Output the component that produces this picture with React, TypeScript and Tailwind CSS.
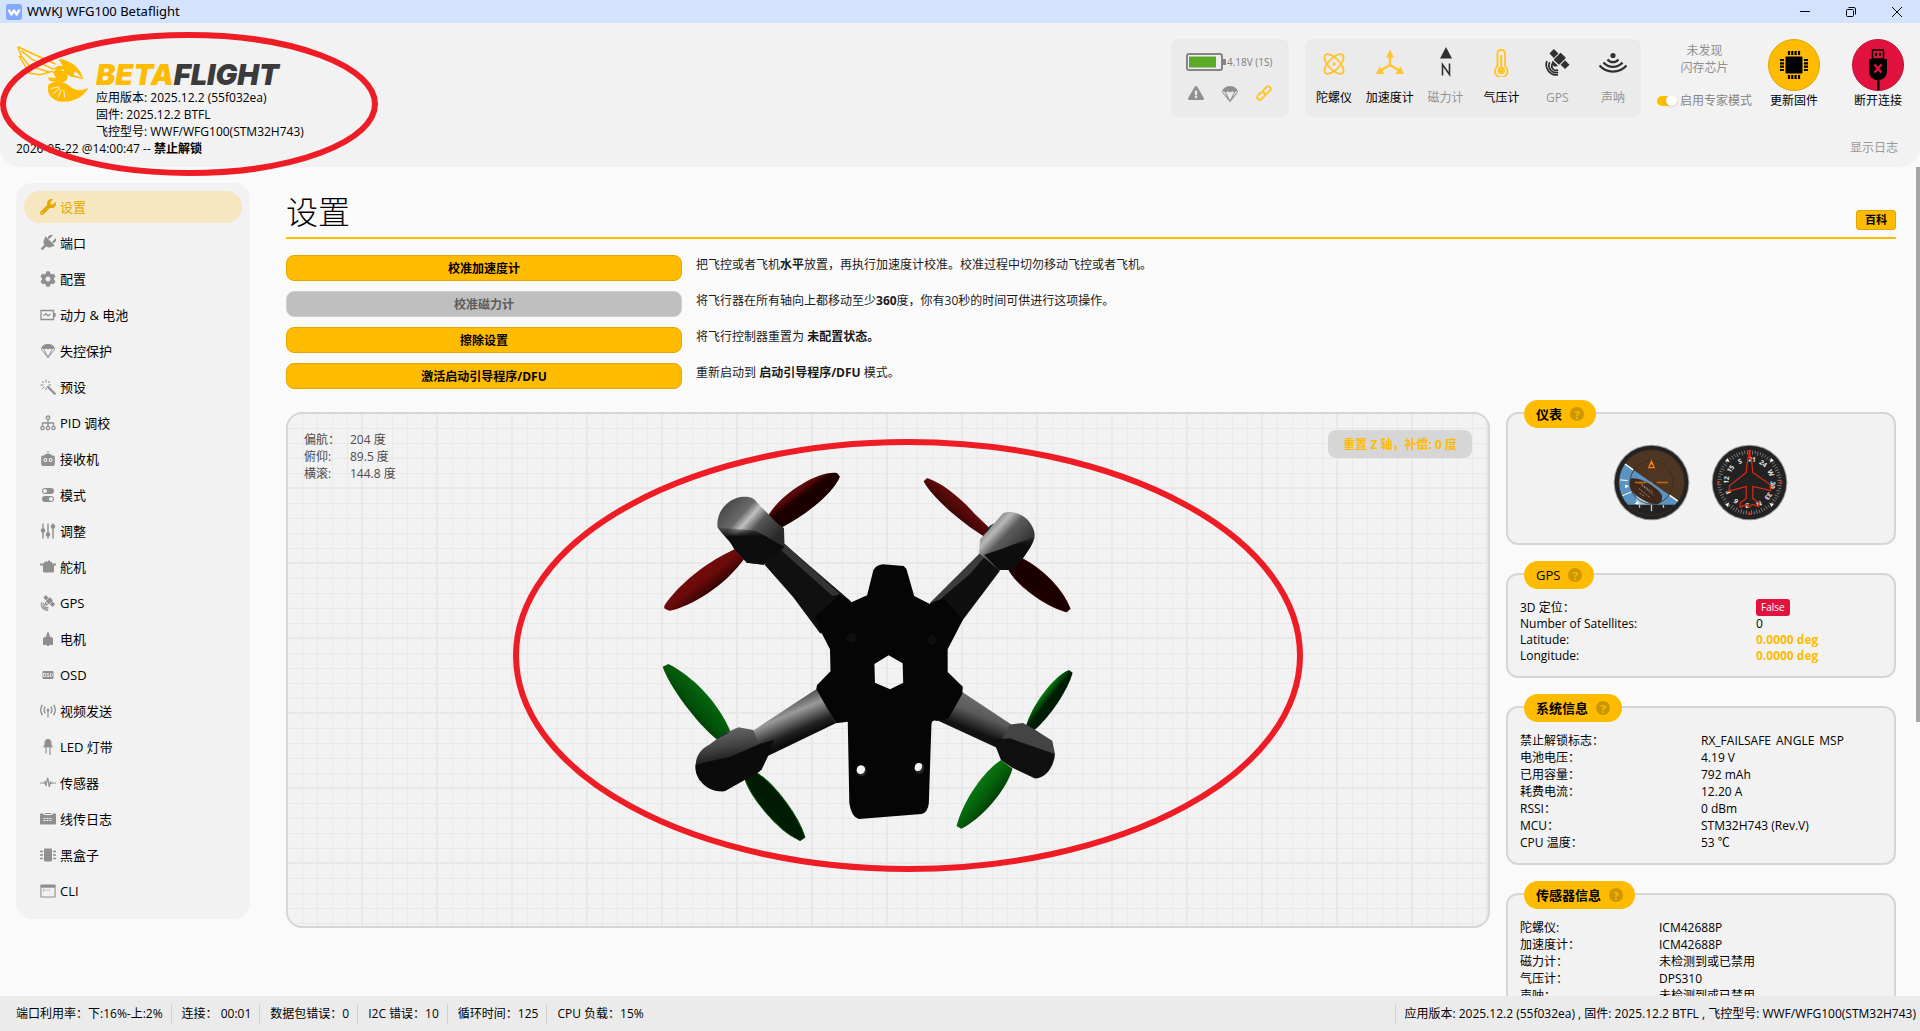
import { useState } from "react";
import type { ReactNode } from "react";
import { FaWrench, FaCog, FaExclamationTriangle } from "react-icons/fa";

type NavItem = { nome: string; icon: ReactNode };
type Row = { label: string; value: ReactNode };

function Glyph({ children }: { children: ReactNode }) {
  return (
    <svg viewBox="0 0 16 16" className="size-4" fill="currentColor">
      {children}
    </svg>
  );
}

function Parachute({ className }: { className: string }) {
  return (
    <svg viewBox="0 0 16 16" className={className} fill="currentColor">
      <path d="M1 6.4a7 5.6 0 0 1 14 0L13.600 5.600 12 6.600 10 5.600 8 6.600 6 5.600 4 6.600 2.400 5.600z" />
      <path
        d="M1.300 6.400 8 14.600 14.700 6.400M4 6.400 8 14.600 12 6.400"
        fill="none"
        stroke="currentColor"
        strokeWidth="0.900"
      />
    </svg>
  );
}

function Satellite({ className }: { className: string }) {
  return (
    <svg viewBox="0 0 30 30" className={className} fill="currentColor">
      <g transform="rotate(45 17 11)">
        <rect x="5" y="7.500" width="7" height="7" />
        <rect x="13" y="5" width="8.500" height="11" rx="1" />
        <rect x="22.500" y="7.500" width="7" height="7" />
        <path d="M13 17.500h8.500l-2 3.500h-4.500z" />
      </g>
      <g fill="none" stroke="currentColor" strokeWidth="1.900">
        <path d="M9.500 16.500a4.500 4.500 0 0 0 6 6.500" />
        <path d="M6.400 14.500a8 8 0 0 0 9.400 11.400" />
        <path d="M3.200 13.500a11.400 11.400 0 0 0 12.300 15.200" />
      </g>
    </svg>
  );
}

const navItems: NavItem[] = [
  { nome: "设置", icon: <FaWrench className="size-4" /> },
  {
    nome: "端口",
    icon: (
      <Glyph>
        <g transform="rotate(45 8 8)">
          <rect x="3.700" y="-1.500" width="2.300" height="6" rx="1" />
          <rect x="10" y="-1.500" width="2.300" height="6" rx="1" />
          <path d="M1.800 5h12.400v2h-.7a5.400 5.400 0 0 1-4.200 4.800V17H6.700v-5.200a5.400 5.400 0 0 1-4.200-4.800h-.7z" />
        </g>
      </Glyph>
    ),
  },
  { nome: "配置", icon: <FaCog className="size-4" /> },
  {
    nome: "动力 & 电池",
    icon: (
      <Glyph>
        <path d="M1 3.500h12.500v9H1z" fill="none" stroke="currentColor" strokeWidth="1.300" />
        <rect x="14" y="6" width="1.600" height="4" />
        <path d="M3.500 8.700 6 6.700l2 2.300 2.500-2" fill="none" stroke="currentColor" strokeWidth="1.200" />
      </Glyph>
    ),
  },
  { nome: "失控保护", icon: <Parachute className="size-4" /> },
  {
    nome: "预设",
    icon: (
      <Glyph>
        <path
          d="M8 8l6.800 6.800"
          stroke="currentColor"
          strokeWidth="2.200"
          strokeLinecap="round"
        />
        <path
          d="M6 .5v3M6 8.500v2.500M.5 6h3M8.500 6H11M2 2l2 2M10 2 8 4M2 10l2-2"
          stroke="currentColor"
          strokeWidth="1"
        />
      </Glyph>
    ),
  },
  {
    nome: "PID 调校",
    icon: (
      <Glyph>
        <g fill="none" stroke="currentColor" strokeWidth="1.300">
          <circle cx="8" cy="2.700" r="1.700" />
          <circle cx="2.500" cy="13" r="1.700" />
          <circle cx="8" cy="13" r="1.700" />
          <circle cx="13.500" cy="13" r="1.700" />
          <path d="M8 4.500v6.700M2.500 11.200V8h11v3.200" />
        </g>
      </Glyph>
    ),
  },
  {
    nome: "接收机",
    icon: (
      <Glyph>
        <rect x="7.500" y="0" width="1" height="4" />
        <path
          fillRule="evenodd"
          d="M4 4.500 5.500 3h5L12 4.500h1A1.800 1.800 0 0 1 14.800 6.300v7A1.800 1.800 0 0 1 13 15H3a1.800 1.800 0 0 1-1.800-1.700v-7A1.800 1.800 0 0 1 3 4.500zM5.300 7a2 2 0 1 0 .01 0zM10.700 7a2 2 0 1 0 .01 0z"
        />
        <circle cx="5.300" cy="9" r="0.900" />
        <circle cx="10.700" cy="9" r="0.900" />
      </Glyph>
    ),
  },
  {
    nome: "模式",
    icon: (
      <Glyph>
        <path fillRule="evenodd" d="M5 1h6a3 3 0 0 1 0 6H5a3 3 0 0 1 0-6zm0 1a2 2 0 1 0 .01 0z" />
        <path fillRule="evenodd" d="M5 9h6a3 3 0 0 1 0 6H5a3 3 0 0 1 0-6zm6 1a2 2 0 1 0 .01 0z" />
      </Glyph>
    ),
  },
  {
    nome: "调整",
    icon: (
      <Glyph>
        <path d="M3 .5v15M8 .5v15M13 .5v15" stroke="currentColor" strokeWidth="1.400" />
        <circle cx="3" cy="7.500" r="2.300" />
        <circle cx="8" cy="11.500" r="2.300" />
        <circle cx="13" cy="3.500" r="2.300" />
      </Glyph>
    ),
  },
  {
    nome: "舵机",
    icon: (
      <Glyph>
        <path d="M5 2.500h3V1.500h2v1h1l1.500 2H16v2h-2V12a1.500 1.500 0 0 1-1.500 1.500h-8A1.500 1.500 0 0 1 3 12V6.500H0v-2h3.500z" />
      </Glyph>
    ),
  },
  { nome: "GPS", icon: <Satellite className="size-4" /> },
  {
    nome: "电机",
    icon: (
      <Glyph>
        <path d="M7.400 1.500Q8 0 8.600 1.500L9.800 5v1h1.700l1.500 1.500V14H9v1H7v-1H3V7.500L4.500 6h1.700V5z" />
      </Glyph>
    ),
  },
  {
    nome: "OSD",
    icon: (
      <Glyph>
        <rect x="2.500" y="4" width="11" height="8" rx="1" />
        <g fill="none" stroke="#f2f2f2" strokeWidth="0.800">
          <rect x="3.600" y="6.500" width="2.200" height="3" />
          <path d="M9.200 6.500H7.300V8h1.600v1.500H7M10.500 6.500v3h1.200l.7-.8V7.300l-.7-.8z" />
        </g>
      </Glyph>
    ),
  },
  {
    nome: "视频发送",
    icon: (
      <Glyph>
        <circle cx="8" cy="7" r="1.500" />
        <rect x="7.400" y="8" width="1.200" height="6.500" />
        <path
          d="M5.400 3.800a4.600 4.600 0 0 0 0 6.400M10.600 3.800a4.600 4.600 0 0 1 0 6.400M2.500 2a8 8 0 0 0 0 10M13.500 2a8 8 0 0 1 0 10"
          fill="none"
          stroke="currentColor"
          strokeWidth="1.500"
        />
      </Glyph>
    ),
  },
  {
    nome: "LED 灯带",
    icon: (
      <Glyph>
        <path d="M4.500 4.500a3.500 4.500 0 0 1 7 0V6.500h1v2h-9v-2h1z" />
        <path d="M6 9v5.500M10 9v7" stroke="currentColor" strokeWidth="1.200" />
      </Glyph>
    ),
  },
  {
    nome: "传感器",
    icon: (
      <Glyph>
        <path
          d="M0 8h4l1-1.500L6 11 7.700 2.500 9.300 12l1.200-5 1 1.500L12.300 8H16"
          fill="none"
          stroke="currentColor"
          strokeWidth="1.200"
        />
      </Glyph>
    ),
  },
  {
    nome: "线传日志",
    icon: (
      <Glyph>
        <path d="M0 2.500h3L4.500 4h7L13 2.500h3v10a1 1 0 0 1-1 1H1a1 1 0 0 1-1-1z" />
        <path d="M5 2.500h6" stroke="currentColor" strokeWidth="1" />
        <path d="M3.500 7.500h9M3.500 9.500h9" stroke="#f2f2f2" strokeWidth="1" strokeDasharray="2 1" />
      </Glyph>
    ),
  },
  {
    nome: "黑盒子",
    icon: (
      <Glyph>
        <rect x="4" y="1.500" width="8" height="13" rx="0.800" />
        <path
          d="M0 4.500h3M0 8h3M0 11.500h3M13 4.500h3M13 8h3M13 11.500h3"
          stroke="currentColor"
          strokeWidth="1.300"
        />
      </Glyph>
    ),
  },
  {
    nome: "CLI",
    icon: (
      <Glyph>
        <path
          fillRule="evenodd"
          d="M1 1.500h14a.6.6 0 0 1 .6.600v11.800a.6.6 0 0 1-.6.600H1a.6.6 0 0 1-.6-.6V2.100a.6.6 0 0 1 .6-.6zM1.500 4.800v8.700h13V4.800z"
        />
        <path d="M3 6l1.700 1.200L3 8.500M6 7.200h1.500M8.500 7.200H10" fill="none" stroke="currentColor" strokeWidth="0.800" />
      </Glyph>
    ),
  },
];

const sensors = [
  {
    nome: "陀螺仪",
    ativo: true,
    icon: (
      <g fill="none" stroke="currentColor" strokeWidth="1.800">
        <ellipse cx="15" cy="17" rx="5.500" ry="12.500" transform="rotate(44 15 17)" />
        <ellipse cx="15" cy="17" rx="5.500" ry="12.500" transform="rotate(-44 15 17)" />
        <circle cx="15" cy="17" r="1.700" fill="currentColor" stroke="none" />
      </g>
    ),
  },
  {
    nome: "加速度计",
    ativo: true,
    icon: (
      <g>
        <path d="M15 6v12M15 18 5 24M15 18l10 6" stroke="currentColor" strokeWidth="2.400" fill="none" />
        <path d="M15 2.500 19 10.500h-8zM1 27 4.500 19.500l5 7.500zM29 27l-3.500-7.500-5 7.500z" />
      </g>
    ),
  },
  {
    nome: "磁力计",
    ativo: false,
    icon: (
      <g>
        <path d="M15 0 21 11.500H9z" />
        <path d="M11.500 28.500V17.500l7 10V16.500" fill="none" stroke="currentColor" strokeWidth="1.600" />
      </g>
    ),
  },
  {
    nome: "气压计",
    ativo: true,
    icon: (
      <g>
        <path
          d="M11.500 19V6a3.800 3.800 0 0 1 7.500 0v13a6.300 6.300 0 1 1-7.500 0z"
          fill="none"
          stroke="currentColor"
          strokeWidth="1.900"
        />
        <circle cx="15.200" cy="23.500" r="3.800" />
        <rect x="14.200" y="8" width="2" height="14" />
      </g>
    ),
  },
  { nome: "GPS", ativo: false, icon: null },
  {
    nome: "声呐",
    ativo: false,
    icon: (
      <g>
        <circle cx="15" cy="8.500" r="2.600" />
        <g fill="none" stroke="currentColor" strokeWidth="2.200">
          <path d="M9.500 12.500a7 7 0 0 0 11 0" />
          <path d="M5.500 15.500a12.500 12.500 0 0 0 19 0" />
          <path d="M1.500 18.500a18 18 0 0 0 27 0" />
        </g>
      </g>
    ),
  },
];

const acoes = [
  {
    botao: "校准加速度计",
    desativado: false,
    texto: (
      <>
        把飞控或者飞机<b>水平</b>放置，再执行加速度计校准。校准过程中切勿移动飞控或者飞机。
      </>
    ),
  },
  {
    botao: "校准磁力计",
    desativado: true,
    texto: (
      <>
        将飞行器在所有轴向上都移动至少<b>360</b>度，你有30秒的时间可供进行这项操作。
      </>
    ),
  },
  {
    botao: "擦除设置",
    desativado: false,
    texto: (
      <>
        将飞行控制器重置为 <b>未配置状态。</b>
      </>
    ),
  },
  {
    botao: "激活启动引导程序/DFU",
    desativado: false,
    texto: (
      <>
        重新启动到 <b>启动引导程序/DFU</b> 模式。
      </>
    ),
  },
];

const gpsRows: Row[] = [
  {
    label: "3D 定位：",
    value: (
      <span className="block w-fit rounded-[3px] bg-[#e2123f] px-[5px] text-[10px] leading-[17px] text-white">
        False
      </span>
    ),
  },
  { label: "Number of Satellites:", value: "0" },
  { label: "Latitude:", value: <a href="#map" className="font-bold text-[#ffbb00]">0.0000 deg</a> },
  { label: "Longitude:", value: <a href="#map" className="font-bold text-[#ffbb00]">0.0000 deg</a> },
];

const systemRows: Row[] = [
  {
    label: "禁止解锁标志：",
    value: (
      <span className="flex gap-[5px]">
        <span>RX_FAILSAFE</span>
        <span>ANGLE</span>
        <span>MSP</span>
      </span>
    ),
  },
  { label: "电池电压：", value: "4.19 V" },
  { label: "已用容量：", value: "792 mAh" },
  { label: "耗费电流：", value: "12.20 A" },
  { label: "RSSI：", value: "0 dBm" },
  { label: "MCU：", value: "STM32H743 (Rev.V)" },
  { label: "CPU 温度：", value: "53 ℃" },
];

const sensorRows: Row[] = [
  { label: "陀螺仪:", value: "ICM42688P" },
  { label: "加速度计：", value: "ICM42688P" },
  { label: "磁力计：", value: "未检测到或已禁用" },
  { label: "气压计：", value: "DPS310" },
  { label: "声呐：", value: "未检测到或已禁用" },
];

const statusItems = [
  "端口利用率：下:16%-上:2%",
  "连接： 00:01",
  "数据包错误：0",
  "I2C 错误：10",
  "循环时间：125",
  "CPU 负载：15%",
];

function Bee() {
  return (
    <svg viewBox="50 133 219 174" className="mr-[6px] h-[58px] w-[73px] shrink-0" fill="#ffbb00">
      <path
        d="M55 138 L76 148 L168 190 M55 138 L66 166 L60 168 L79 198 L88 217 L122 222 L160 212 M66 150 L98 176 L164 206 M66 166 L90 196 L150 214"
        fill="none"
        stroke="#ffbb00"
        strokeWidth="4.500"
        strokeLinejoin="round"
      />
      <path d="M177 174 C215 178 244 202 252 236 L226 230 C206 228 196 216 192 205 L176 212 L163 204 L176 195 L190 196 Z" />
      <path d="M228 212 L248 231 L222 222 Z" fill="#f2f2f2" />
      <path d="M160 214 C172 205 188 205 200 216 C208 226 206 240 192 244 L174 245 L150 240 L146 230 L170 232 Z" />
      <path d="M147 252 C160 240 190 240 206 252 C222 268 244 274 267 261 C254 288 222 306 186 303 C156 300 140 276 147 252 Z" />
      <path
        d="M180 258 L154 264 M182 262 L160 280 M187 266 L176 290 M193 268 L196 290"
        stroke="#f2f2f2"
        strokeWidth="3"
      />
    </svg>
  );
}

function Panel({ titulo, children }: { titulo: ReactNode; children: ReactNode }) {
  return (
    <section className="relative rounded-xl border-2 border-[#d6d6d6] bg-[#f2f2f2] px-3 pt-[24px] pb-3">
      <h2 className="absolute -top-[14px] left-4 flex h-7 items-center gap-2 rounded-full bg-[#ffbb00] px-3 text-[13px] font-semibold">
        {titulo}
        <span className="flex size-[14px] items-center justify-center rounded-full bg-[#cc9600] text-[11px] font-bold text-[#ffbb00]">
          ?
        </span>
      </h2>
      {children}
    </section>
  );
}

function InfoTable({ rows, col, line }: { rows: Row[]; col: string; line: string }) {
  return (
    <table className={`w-full table-fixed text-left ${line}`}>
      <tbody>
        {rows.map((row) => (
          <tr key={row.label}>
            <th className={`${col} font-normal`}>{row.label}</th>
            <td className="align-top whitespace-nowrap">{row.value}</td>
          </tr>
        ))}
      </tbody>
    </table>
  );
}

function Horizon() {
  return (
    <svg viewBox="370 162 232 232" className="size-[77px]">
      <defs>
        <clipPath id="dial">
          <circle cx="486" cy="278" r="98" />
        </clipPath>
      </defs>
      <circle cx="486" cy="278" r="114" fill="#444" opacity="0.500" />
      <circle cx="486" cy="278" r="111" fill="#222" />
      <g clipPath="url(#dial)">
        <rect x="386" y="178" width="200" height="200" fill="#4f3623" />
        <path d="M386 208 586 348H386z" fill="#5b94c2" />
        <path d="M404 221 431 240M540 316 566 334" stroke="#fff" strokeWidth="4" />
        <path d="M424 266C450 258 510 296 518 318 518 334 514 342 500 344 460 338 420 310 420 282z" fill="#402818" />
        <path d="M448 278l44 30M456 286l36 30M448 296l34 28M450 310l16 10" stroke="#c9b8a8" strokeWidth="2" strokeDasharray="6 3" />
        <path d="M440 318l46 28h-46z" fill="#a9c8e0" />
        <path d="M390 270l24 2M398 318l28-12M408 286l8 3-8 4zM436 342l8-6 4 8" stroke="#fff" strokeWidth="3" fill="#fff" />
        <path d="M386 345H586V380H386z" fill="#222" />
      </g>
      <circle cx="486" cy="278" r="65" fill="none" stroke="#3a281b" strokeWidth="3" opacity="0.800" />
      <circle cx="486" cy="278" r="99" fill="none" stroke="#3b2c20" strokeWidth="3" />
      <path d="M436 278h34M502 278h34M483 278h6" stroke="#c8680c" strokeWidth="5" />
      <path d="M486 214 478 233h16zM486 214v10" fill="none" stroke="#ff7f0e" strokeWidth="4" />
      <path d="M486 345v20M450 346v8M522 346v8" stroke="#ccc" strokeWidth="4" />
    </svg>
  );
}

const rumos = ["N", "3", "6", "E", "12", "15", "S", "21", "24", "W", "30", "33"];

function Compass() {
  const heading = 204;
  const ticks = Array.from({ length: 72 }, (_, i) => i * 5);

  return (
    <svg viewBox="664 162 232 232" className="size-[77px]">
      <circle cx="780" cy="278" r="114" fill="#444" opacity="0.500" />
      <circle cx="780" cy="278" r="111" fill="#222" />
      {ticks.map((a) => (
        <path
          key={a}
          d={a % 2 ? "M780 181v9" : "M780 181v13"}
          stroke="#999"
          strokeWidth="2"
          transform={`rotate(${a - heading} 780 278)`}
        />
      ))}
      {rumos.map((r, i) => (
        <text
          key={r}
          x="780"
          y="215"
          textAnchor="middle"
          fontSize="20"
          fontWeight="700"
          fill="#e6e6e6"
          transform={`rotate(${i * 30 - heading} 780 278)`}
        >
          {r}
        </text>
      ))}
      {[0, 45, 90, 135, 180, 225, 270, 315].map((a) => (
        <path
          key={a}
          d="M774 180h12l-6 11z"
          fill={a % 90 ? "#fff" : "#e02410"}
          transform={`rotate(${a} 780 278)`}
        />
      ))}
      <path
        d="M780 186C785 205 789 218 790 248L842 284 844 302 790 290V326L808 340V350L788 344 780 352 772 344 752 352V340L770 326V290L718 304 720 288 770 248C771 218 775 205 780 186z"
        fill="none"
        stroke="#e62a12"
        strokeWidth="3.500"
      />
    </svg>
  );
}

function Quadcopter() {
  return (
    <svg x="500" y="420" width="820" height="460" viewBox="0 0 1568 1380" preserveAspectRatio="none">
      <defs>
        <linearGradient id="red" x1="0" y1="0" x2="1" y2="1">
          <stop offset="0.300" stopColor="#7a0c0c" />
          <stop offset="0.500" stopColor="#6a0a0a" />
          <stop offset="0.650" stopColor="#2a0202" />
        </linearGradient>
        <linearGradient id="redDark" x1="0" y1="0" x2="1" y2="1">
          <stop offset="0.380" stopColor="#5a0a0a" />
          <stop offset="0.460" stopColor="#1c0000" />
        </linearGradient>
        <linearGradient id="redThin" x1="0" y1="1" x2="1" y2="0">
          <stop offset="0.350" stopColor="#2c0303" />
          <stop offset="0.550" stopColor="#5e0a0a" />
        </linearGradient>
        <linearGradient id="green" x1="0" y1="1" x2="1" y2="0">
          <stop offset="0.300" stopColor="#012f04" />
          <stop offset="0.450" stopColor="#024f08" />
          <stop offset="0.650" stopColor="#076b10" />
        </linearGradient>
        <linearGradient id="greenLow" x1="0" y1="0" x2="1" y2="1">
          <stop offset="0.300" stopColor="#0a8014" />
          <stop offset="0.500" stopColor="#046009" />
          <stop offset="0.700" stopColor="#013004" />
        </linearGradient>
        <linearGradient id="greenDark" x1="0" y1="0" x2="1" y2="1">
          <stop offset="0.380" stopColor="#088012" />
          <stop offset="0.500" stopColor="#001c02" />
        </linearGradient>
        <linearGradient id="podTL" gradientUnits="userSpaceOnUse" x1="420" y1="260" x2="540" y2="330">
          <stop offset="0" stopColor="#444" />
          <stop offset="0.350" stopColor="#6a6a6a" />
          <stop offset="0.480" stopColor="#c0c0c0" />
          <stop offset="0.650" stopColor="#555" />
          <stop offset="1" stopColor="#2a2a2a" />
        </linearGradient>
        <linearGradient id="shade" x1="0" y1="0" x2="0" y2="1">
          <stop offset="0" stopColor="#0d0d0d" stopOpacity="0.200" />
          <stop offset="0.250" stopColor="#0d0d0d" />
        </linearGradient>
        <linearGradient id="podTR" gradientUnits="userSpaceOnUse" x1="920" y1="310" x2="1020" y2="370">
          <stop offset="0" stopColor="#5a5a5a" />
          <stop offset="0.300" stopColor="#b8b8b8" />
          <stop offset="0.500" stopColor="#5c5c5c" />
          <stop offset="1" stopColor="#2c2c2c" />
        </linearGradient>
        <linearGradient id="armBL" gradientUnits="userSpaceOnUse" x1="520" y1="860" x2="580" y2="950">
          <stop offset="0" stopColor="#4a4a4a" />
          <stop offset="0.350" stopColor="#9a9a9a" />
          <stop offset="0.800" stopColor="#222" />
          <stop offset="1" stopColor="#0c0c0c" />
        </linearGradient>
        <linearGradient id="armBR" gradientUnits="userSpaceOnUse" x1="950" y1="850" x2="900" y2="930">
          <stop offset="0" stopColor="#707070" />
          <stop offset="0.500" stopColor="#5a5a5a" />
          <stop offset="1" stopColor="#111" />
        </linearGradient>
        <linearGradient id="podBL" gradientUnits="userSpaceOnUse" x1="430" y1="920" x2="460" y2="1030">
          <stop offset="0" stopColor="#6b6b6b" />
          <stop offset="0.500" stopColor="#444" />
          <stop offset="1" stopColor="#101010" />
        </linearGradient>
      </defs>

      {/* propellers */}
      <path d="M508 300C520 262 545 222 578 192 602 168 632 154 645 160L650 170C640 210 600 270 540 322z" fill="url(#redDark)" />
      <path d="M455 384C410 412 360 470 330 525 315 552 311 562 316 567L324 572C362 562 430 500 470 410z" fill="url(#red)" />
      <path d="M810 184 817 174C846 190 880 232 908 282L940 330 926 350C880 305 826 232 810 184z" fill="url(#redThin)" />
      <path
        d="M994 412C1040 448 1076 510 1090 566L1083 576C1040 558 985 490 972 446z"
        fill="#1c0000"
        stroke="#3c0606"
        strokeWidth="2"
      />
      <path d="M311 740 322 732C366 765 420 850 442 940L416 960C376 910 324 800 311 740z" fill="url(#green)" />
      <path
        d="M488 1055C525 1090 572 1190 583 1252L574 1262C526 1230 476 1120 468 1075z"
        fill="#001c02"
        stroke="#04500a"
        strokeWidth="2"
      />
      <path d="M1005 922C1015 862 1056 770 1088 750L1095 758C1086 810 1052 890 1022 930z" fill="url(#greenDark)" />
      <path d="M958 1020 980 1046C966 1120 916 1200 882 1226L873 1218C884 1150 920 1060 958 1020z" fill="url(#greenLow)" />

      {/* arms */}
      <path d="M542 370 672 545 640 640 612 640 560 530 506 434z" fill="#101010" />
      <path d="M545 372 650 522 636 528 530 380z" fill="#333" />
      <path d="M918 400 822 550 860 650 885 600 956 452z" fill="#0f0f0f" />
      <path d="M918 400 822 550 842 538 900 460 930 405z" fill="#3c3c3c" />
      <path d="M606 806 480 936 480 1010 512 1008 642 910z" fill="url(#armBL)" />
      <path d="M884 816 980 916 960 990 948 982 838 902z" fill="url(#armBR)" />

      {/* motor pods */}
      <path d="M416 322C412 272 440 228 468 230 482 230 488 238 492 248L530 310 543 325 544 372 520 420 504 434 472 428 448 388C440 360 425 345 416 322z" fill="url(#podTL)" />
      <path d="M416 322 490 332C510 350 530 370 544 380L520 420 504 434 472 428 448 388C440 360 425 345 416 322z" fill="url(#shade)" />
      <path d="M962 280C980 268 1008 285 1018 320 1026 345 1022 362 1014 382L1000 415 978 450 954 450 916 400 918 358 934 330z" fill="url(#podTR)" />
      <path d="M1022 350 960 386 926 404 954 450 978 450 1000 415 1014 382z" fill="url(#shade)" />
      <path d="M374 1040C374 1000 388 985 400 974L430 940 456 922 484 930 506 1010 496 1055 430 1113C400 1120 372 1080 374 1040z" fill="url(#podBL)" />
      <path d="M374 1034 440 1010 500 970 524 960 512 1010 500 1050 430 1113C400 1120 372 1080 374 1034z" fill="#0b0b0b" />
      <path d="M974 914 1000 909 1020 926 1056 962 1061 1000 1060 1004 960 958z" fill="#444" />
      <path d="M948 958 975 955 1061 1002C1060 1040 1042 1078 1022 1075L978 1042 958 1020 948 980z" fill="#101010" />
      <path d="M405 968 430 940 440 936 412 960z" fill="#06293a" />
      <path d="M930 338 945 310 936 318z" fill="#06394a" />

      {/* frame with the centre cut-out */}
      <path
        fillRule="evenodd"
        d="M724 436 732 433 772 438 777 446 792 528 822 552 850 536 885 600 856 688V756L885 800 884 822 858 894 836 903Q826 898 825 912L820 1150Q818 1178 806 1182L686 1197Q672 1192 668 1150L665 905 642 910 605 808 606 796 632 754 631 688 612 630 602 590 650 524 670 548 702 526 714 450Q718 440 724 436zM743 706 716 732 717 788 746 808 771 788 770 730z"
        fill="#050505"
      />
      <ellipse cx="692" cy="1052" rx="9" ry="17" fill="#2a2a2a" />
      <ellipse cx="690" cy="1049" rx="8" ry="13" fill="#f2f2f2" transform="rotate(8 690 1049)" />
      <ellipse cx="802" cy="1044" rx="9" ry="17" fill="#2a2a2a" />
      <ellipse cx="800" cy="1041" rx="7" ry="12" fill="#f2f2f2" transform="rotate(8 800 1041)" />
      <ellipse cx="672" cy="654" rx="10" ry="14" fill="#0f0f0f" />
      <ellipse cx="826" cy="660" rx="8" ry="14" fill="#0f0f0f" />
    </svg>
  );
}

export default function App() {
  const [aba, setAba] = useState("设置");
  const [expert, setExpert] = useState(true);

  return (
    <div className="flex h-screen flex-col overflow-hidden bg-[#fafafa] font-['Open_Sans','Noto_Sans_CJK_SC',sans-serif] text-xs leading-[17px] text-black">
      <div className="flex h-[23px] shrink-0 items-center gap-[5px] bg-[#d3e3fd] pl-[6px]">
        <svg viewBox="0 0 16 16" className="size-4">
          <rect width="16" height="16" rx="3" fill="#82a8fa" />
          <path d="M2.500 5.500 5.300 10.500 8 6.500l2.700 4L13.500 5.500" fill="none" stroke="#fff" strokeWidth="2.400" strokeLinejoin="round" />
        </svg>
        <span className="font-['Noto_Sans',sans-serif] text-[13px]">WWKJ WFG100 Betaflight</span>
        <div className="ml-auto flex">
          <button aria-label="最小化" className="flex h-[23px] w-[46px] items-center justify-center">
            <svg viewBox="0 0 12 12" className="size-3" stroke="#000">
              <path d="M1 5.500h10" />
            </svg>
          </button>
          <button aria-label="还原" className="flex h-[23px] w-[46px] items-center justify-center">
            <svg viewBox="0 0 12 12" className="size-3" stroke="#000" fill="none">
              <rect x="1.500" y="3.500" width="7" height="7" rx="1" />
              <path d="M3.500 1.500h5.500a1.500 1.500 0 0 1 1.500 1.500v5.500" />
            </svg>
          </button>
          <button aria-label="关闭" className="flex h-[23px] w-[46px] items-center justify-center">
            <svg viewBox="0 0 12 12" className="size-3" stroke="#000">
              <path d="M1 1l10 10M11 1 1 11" />
            </svg>
          </button>
        </div>
      </div>

      <header className="relative flex h-[144px] shrink-0 justify-between rounded-b-[20px] bg-[#f2f2f2] px-4">
        <div className="pt-[22px]">
          <div className="flex">
            <Bee />
            <div className="pt-4 pl-px">
              <h1 className="font-[Inter,sans-serif] text-[29px] leading-7 font-black text-[#3b3b3b] italic">
                <span className="text-[#ffbb00]">BETA</span>FLIGHT
              </h1>
              <p>应用版本: 2025.12.2 (55f032ea)</p>
              <p>固件: 2025.12.2 BTFL</p>
              <p>飞控型号: WWF/WFG100(STM32H743)</p>
            </div>
          </div>
          <p>
            2026-05-22 @14:00:47 -- <b>禁止解锁</b>
          </p>
        </div>

        <div className="flex flex-col pt-4">
          <div className="flex h-[78px] gap-4">
            <div className="flex w-[118px] flex-col rounded-lg bg-[#ebebeb] px-[15px] pt-[14px]">
              <div className="flex items-center gap-px whitespace-nowrap">
                <svg viewBox="0 0 40 18" className="h-[18px] w-10 shrink-0">
                  <rect x="1" y="1" width="35" height="16" rx="2" fill="#eee" stroke="#858585" strokeWidth="2" />
                  <rect x="37" y="6" width="3" height="6" fill="#858585" />
                  <rect x="3" y="3.500" width="27" height="11" fill="#59aa29" />
                </svg>
                <span className="text-[10px] text-[#7d7d7d]">4.18V (1S)</span>
              </div>
              <div className="mt-[14px] flex justify-between pr-[2px] pl-[2px] text-[#8f8f8f]">
                <FaExclamationTriangle className="size-4" />
                <Parachute className="size-[18px]" />
                <svg viewBox="0 0 16 16" className="size-4 text-[#ffc42e]" fill="none" stroke="currentColor" strokeWidth="2">
                  <rect x="6.700" y="2.600" width="8.500" height="5" rx="2.500" transform="rotate(-45 11 5.100)" />
                  <rect x="0.800" y="8.400" width="8.500" height="5" rx="2.500" transform="rotate(-45 5.100 10.900)" />
                </svg>
              </div>
            </div>

            <div className="flex w-[336px] rounded-lg bg-[#ebebeb] pt-2 pl-px">
              {sensors.map((s) => (
                <div
                  key={s.nome}
                  className={`flex flex-1 flex-col items-center whitespace-nowrap ${
                    s.ativo ? "text-black" : "text-[#949494]"
                  }`}
                >
                  <span
                    className={`flex h-[42px] items-start ${s.ativo ? "text-[#ffc42e]" : "text-[#303030]"}`}
                  >
                    {s.icon ? (
                      <svg viewBox="0 0 30 30" className="size-[30px]" fill="currentColor">
                        {s.icon}
                      </svg>
                    ) : (
                      <Satellite className="mt-[2px] size-[27px]" />
                    )}
                  </span>
                  <span>{s.nome}</span>
                </div>
              ))}
            </div>

            <div className="flex flex-col items-center pt-[3px] text-[#8f8f8f]">
              <span>未发现</span>
              <span>闪存芯片</span>
              <label className="mt-4 flex items-center gap-[3px] text-[#858585]">
                <input
                  type="checkbox"
                  checked={expert}
                  onChange={(e) => setExpert(e.target.checked)}
                  className="peer sr-only"
                />
                <span className="flex h-[10px] w-5 items-center justify-start rounded-full bg-[#c4c4c4] peer-checked:justify-end peer-checked:bg-[#ffbb00]">
                  <span className="size-[11px] rounded-full bg-white shadow" />
                </span>
                启用专家模式
              </label>
            </div>

            <button className="flex w-[52px] flex-col items-center gap-px">
              <span className="flex size-[52px] items-center justify-center rounded-full border border-[#e0a500] bg-[#ffbb00]">
                <svg viewBox="0 0 28 28" className="size-7">
                  <rect x="5.500" y="5.500" width="17" height="17" rx="1" />
                  <path
                    d="M9 0v4M12.300 0v4M15.600 0v4M19 0v4M9 24v4M12.300 24v4M15.600 24v4M19 24v4M0 9h4M0 12.300h4M0 15.600h4M0 19h4M24 9h4M24 12.300h4M24 15.600h4M24 19h4"
                    stroke="#000"
                    strokeWidth="2.200"
                  />
                </svg>
              </span>
              更新固件
            </button>

            <button className="ml-4 flex w-[52px] flex-col items-center gap-px">
              <span className="flex size-[52px] items-end justify-center rounded-full border border-[#c01038] bg-[#e2123f]">
                <svg viewBox="0 0 18 41" className="h-[41px] w-[18px]">
                  <path d="M3.500 1h11v9h-11z" fill="none" stroke="#000" strokeWidth="1.500" />
                  <path d="M6 4h2v3H6zM10 4h2v3h-2z" />
                  <path d="M0 10h18v12q0 7-7 9H7q-7-2-7-9z" />
                  <rect x="8" y="30" width="2.500" height="11" />
                  <path d="M5.500 15.500l7 8M12.500 15.500l-7 8" stroke="#e2123f" strokeWidth="2.400" />
                </svg>
              </span>
              断开连接
            </button>
          </div>
          <button className="mt-[22px] mr-[6px] self-end text-[#999]">显示日志</button>
        </div>

        <svg
          viewBox="0 0 380 146"
          className="pointer-events-none absolute top-2 left-0 z-10 h-[146px] w-[380px]"
        >
          <ellipse cx="189" cy="73" rx="186" ry="69" fill="none" stroke="#ee1c25" strokeWidth="6" />
        </svg>
      </header>

      <div className="relative flex min-h-0 flex-1">
        <nav className="m-4 flex w-[234px] shrink-0 flex-col self-start rounded-2xl bg-[#f2f2f2] px-2 pt-2 pb-3">
          <ul className="flex flex-col gap-1">
            {navItems.map((item) => (
              <li key={item.nome}>
                <a
                  href={`#${item.nome}`}
                  onClick={() => setAba(item.nome)}
                  className={`flex h-8 items-center gap-1 rounded-full pl-4 text-[13px] ${
                    aba === item.nome ? "bg-[#f6e7c1] text-[#e6a800]" : ""
                  }`}
                >
                  <span className={`flex w-4 ${aba === item.nome ? "" : "text-[#8f8f8f]"}`}>
                    {item.icon}
                  </span>
                  {item.nome}
                </a>
              </li>
            ))}
          </ul>
        </nav>

        <main className="min-w-0 flex-1 overflow-y-auto pt-[22px] pr-6 pb-6 pl-5 [scrollbar-width:none]">
          <div className="flex h-[50px] items-end justify-between border-b-2 border-[#ffbb00] pb-[7px]">
            <h2 className="text-[32px] leading-9 font-light">设置</h2>
            <a
              href="#wiki"
              className="rounded-[3px] border border-[#e0a500] bg-[#ffbb00] px-2 text-[11px] leading-[18px] font-bold"
            >
              百科
            </a>
          </div>

          <div className="mt-4 flex flex-col gap-[10px]">
            {acoes.map((acao) => (
              <div key={acao.botao} className="flex gap-[14px]">
                <button
                  disabled={acao.desativado}
                  className="h-[26px] w-[396px] shrink-0 rounded-lg border border-[#e6a800] bg-[#ffbb00] font-bold disabled:border-[#cfcfcf] disabled:bg-[#bfbfbf] disabled:text-[#5c5c5c]"
                >
                  {acao.botao}
                </button>
                <p className="pt-px text-[#1a1a1a]">{acao.texto}</p>
              </div>
            ))}
          </div>

          <div className="mt-[23px] flex items-start gap-4">
            <div className="relative h-[516px] min-w-0 flex-1 overflow-hidden rounded-2xl border-2 border-[#d6d6d6] bg-[#f2f2f2] bg-[linear-gradient(#e8e8e8_2px,transparent_2px),linear-gradient(90deg,#e8e8e8_2px,transparent_2px),linear-gradient(#e8e8e8_1px,transparent_1px),linear-gradient(90deg,#e8e8e8_1px,transparent_1px)] bg-[size:75px_75px,75px_75px,15px_15px,15px_15px] bg-[position:-2px_-2px,-2px_-2px,-1px_-1px,-1px_-1px]">
              <svg viewBox="288 414 1200 512" className="size-full">
                <Quadcopter />
                <ellipse cx="908" cy="655.500" rx="392" ry="213.500" fill="none" stroke="#ee1c25" strokeWidth="6" />
              </svg>
              <dl className="absolute top-[17px] left-4 grid grid-cols-[46px_auto] text-[#4d4d4d]">
                <dt>偏航：</dt>
                <dd>204 度</dd>
                <dt>俯仰:</dt>
                <dd>89.5 度</dd>
                <dt>横滚:</dt>
                <dd>144.8 度</dd>
              </dl>
              <button className="absolute top-4 right-4 h-7 rounded-lg bg-[#d6d6d6] px-[15px] font-bold text-[#ffbb00]">
                重置 Z 轴，补偿: 0 度
              </button>
            </div>

            <aside className="flex w-[390px] shrink-0 flex-col gap-7">
              <Panel titulo="仪表">
                <div className="flex justify-center gap-[21px] pt-[6px] pr-[2px] pb-[10px]">
                  <Horizon />
                  <Compass />
                </div>
              </Panel>
              <Panel titulo={<span className="font-medium">GPS</span>}>
                <InfoTable rows={gpsRows} col="w-[236px]" line="leading-4" />
              </Panel>
              <Panel titulo="系统信息">
                <InfoTable rows={systemRows} col="w-[181px]" line="leading-[17px]" />
              </Panel>
              <Panel titulo="传感器信息">
                <InfoTable rows={sensorRows} col="w-[139px]" line="leading-[17px]" />
              </Panel>
            </aside>
          </div>
        </main>

        <div className="absolute top-0 right-0 h-[67%] w-1 bg-[#a6a6a6]" />
      </div>

      <footer className="flex h-[35px] shrink-0 items-center justify-between bg-[#ebebeb] pt-px pr-1 pl-4 whitespace-nowrap">
        <ul className="flex gap-[10px]">
          {statusItems.map((item, i) => (
            <li
              key={item}
              className={`leading-5 ${i < statusItems.length - 1 ? "border-r border-[#d1d1d1] pr-2" : ""}`}
            >
              {item}
            </li>
          ))}
        </ul>
        <p className="border-l border-[#d1d1d1] pl-2 leading-5">
          应用版本: 2025.12.2 (55f032ea) , 固件: 2025.12.2 BTFL , 飞控型号: WWF/WFG100(STM32H743)
        </p>
      </footer>
    </div>
  );
}
